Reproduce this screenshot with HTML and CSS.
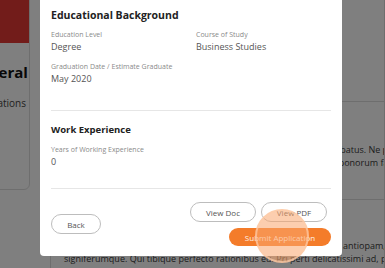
FILE: index.html
```html
<!DOCTYPE html>
<html lang="en">
<head>
    <meta charset="UTF-8">
    <meta name="viewport" content="width=device-width, initial-scale=1.0">
    <title>Application Review</title>
    <link rel="stylesheet" href="styles.css">
</head>
<body>

    <!-- Page behind the dialog -->
    <div class="page">
        <aside class="side-card">
            <div class="side-head"></div>
            <h3 class="side-title">General</h3>
            <p class="side-link">Applications</p>
        </aside>

        <main class="main-card">
            <div class="main-sec main-top"></div>
            <div class="main-sec main-mid">
                <p class="main-text">
                    <span>Lorem ipsum dolor sit amet, te adhuc labore vel eu quo dictas probatus. Ne pro eos malorum vivendum.</span>
                    <span>Mei an pericula euripidis, hinc partem ei est. Et tale nec quo dicta bonorum facilisi mea inani.</span>
                </p>
            </div>
            <div class="main-sec main-low">
                <p class="main-text">
                    <span>Eos ei nisl graecis, vix aperiri consequat an. Ad quod sed quo dicta antiopam, eu vis eripuit.</span>
                    <span>signiferumque. Qui tibique perfecto rationibus eu. Pri perti delicatissimi ad, per et.</span>
                </p>
            </div>
        </main>
    </div>

    <div class="overlay"></div>

    <!-- Application details dialog -->
    <div class="modal">
        <section class="modal-sec">
            <h2 class="sec-title sec-title-lg">Educational Background</h2>
            <div class="field-grid">
                <div class="field">
                    <div class="field-label">Education Level</div>
                    <div class="field-value">Degree</div>
                </div>
                <div class="field">
                    <div class="field-label">Course of Study</div>
                    <div class="field-value">Business Studies</div>
                </div>
                <div class="field field-wide">
                    <div class="field-label">Graduation Date / Estimate Graduate</div>
                    <div class="field-value">May 2020</div>
                </div>
            </div>
        </section>

        <section class="modal-sec modal-sec-work">
            <h2 class="sec-title">Work Experience</h2>
            <div class="field-grid">
                <div class="field field-wide">
                    <div class="field-label">Years of Working Experience</div>
                    <div class="field-value">0</div>
                </div>
            </div>
        </section>

        <div class="modal-footer">
            <button class="btn btn-outline btn-back">Back</button>
            <div class="footer-actions">
                <div class="doc-buttons">
                    <button class="btn btn-outline btn-doc">View Doc</button>
                    <button class="btn btn-outline btn-doc">View PDF</button>
                </div>
                <button class="btn btn-submit">
                    Submit Application
                    <span class="ripple"></span>
                </button>
            </div>
        </div>
    </div>

</body>
</html>
```

FILE: styles.css
```css
body {
    margin: 0;
    font-family: "Open Sans", "DejaVu Sans", sans-serif;
    background-color: #fff;
    color: #333;
    overflow: hidden;
}

/* background page */
.page {
    display: flex;
    gap: 20px;
    margin-top: -20px;
}
.side-card {
    flex: 0 0 74px;
    margin-left: -44px;
    height: 210px;
    box-sizing: border-box;
    border: 1px solid #ddd;
    border-radius: 6px;
    overflow: hidden;
}
.side-head {
    height: 62px;
    background-color: #e53935;
}
.side-title {
    margin: 19px 0 0 12px;
    font-size: 15px;
    line-height: 20px;
    color: #111;
    white-space: nowrap;
}
.side-link {
    margin: 14px 0 0 12px;
    font-size: 10px;
    line-height: 14px;
    color: #444;
    white-space: nowrap;
}
.main-card {
    flex: 1;
    min-width: 0;
    height: 320px;
    border: 1px solid #ddd;
    border-radius: 6px;
    overflow: hidden;
}
.main-sec {
    border-bottom: 1px solid #ddd;
    padding: 0 13px;
}
.main-top {
    height: 120px;
}
.main-mid {
    padding-top: 41px;
    padding-bottom: 30px;
}
.main-low {
    padding-top: 39px;
    border-bottom: none;
}
.main-text {
    margin: 0;
    font-size: 9px;
    line-height: 13px;
    color: #3a3a3a;
}
.main-text span {
    display: block;
    white-space: nowrap;
}

.overlay {
    position: fixed;
    inset: 0;
    background-color: rgba(0, 0, 0, 0.5);
}

/* dialog */
.modal {
    position: fixed;
    left: 40px;
    top: -6px;
    width: 302px;
    box-sizing: border-box;
    padding: 15px 11px 10px;
    background-color: #fff;
    border-radius: 4px;
}
.modal-sec {
    padding-bottom: 24px;
    border-bottom: 1px solid #e6e6e6;
}
.modal-sec-work {
    padding-top: 13px;
    padding-bottom: 19px;
}
.sec-title {
    margin: 0;
    font-size: 9.5px;
    line-height: 12px;
    font-weight: 700;
    color: #222;
}
.sec-title-lg {
    font-size: 10.5px;
}
.field-grid {
    display: grid;
    grid-template-columns: 1fr 1fr;
    column-gap: 10px;
    row-gap: 8px;
    margin-top: 9px;
}
.field-wide {
    grid-column: 1 / 3;
}
.field-label {
    font-size: 7px;
    line-height: 10px;
    color: #8a8a8a;
}
.field-value {
    font-size: 9px;
    line-height: 14px;
    color: #555;
}

.modal-footer {
    display: flex;
    justify-content: space-between;
    align-items: center;
    margin-top: 13px;
}
.footer-actions {
    display: flex;
    flex-direction: column;
    align-items: flex-end;
    gap: 6px;
}
.doc-buttons {
    display: flex;
    gap: 5px;
    margin-right: 4px;
}
.btn {
    font-family: "Open Sans", "DejaVu Sans", sans-serif;
    font-size: 8px;
    padding: 0;
    border-radius: 10px;
    cursor: pointer;
}
.btn-outline {
    height: 20px;
    background-color: #fff;
    border: 1px solid #bdbdbd;
    color: #555;
}
.btn-back {
    width: 50px;
}
.btn-doc {
    width: 66px;
}
.btn-submit {
    position: relative;
    width: 102px;
    height: 18px;
    border: none;
    background-color: #f47c2a;
    color: #fff3e8;
}
.ripple {
    position: absolute;
    left: 26px;
    top: -19px;
    width: 54px;
    height: 54px;
    box-sizing: border-box;
    border-radius: 50%;
    border: 2px solid rgba(253, 205, 170, 0.7);
    background-color: rgba(250, 165, 110, 0.55);
}
```
